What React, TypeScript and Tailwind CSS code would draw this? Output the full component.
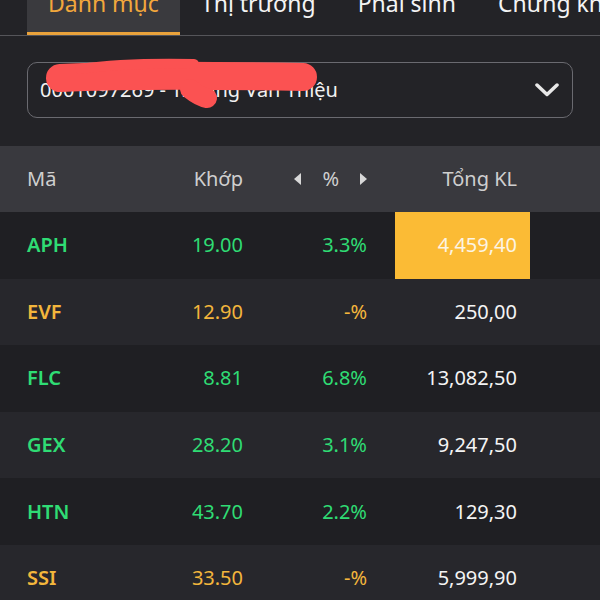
import React from "react";

// Row data for the watchlist table
interface Quote {
  code: string;
  price: string;
  change: string;
  volume: string;
  tone: "up" | "ref";
  flash?: boolean;
}

const quotes: Quote[] = [
  { code: "APH", price: "19.00", change: "3.3%", volume: "4,459,40", tone: "up", flash: true },
  { code: "EVF", price: "12.90", change: "-%", volume: "250,00", tone: "ref" },
  { code: "FLC", price: "8.81", change: "6.8%", volume: "13,082,50", tone: "up" },
  { code: "GEX", price: "28.20", change: "3.1%", volume: "9,247,50", tone: "up" },
  { code: "HTN", price: "43.70", change: "2.2%", volume: "129,30", tone: "up" },
  { code: "SSI", price: "33.50", change: "-%", volume: "5,999,90", tone: "ref" },
];

const tabs = ["Danh mục", "Thị trường", "Phái sinh", "Chứng khoán"];

const App = () => {
  return (
    <div
      className="w-[600px] h-[600px] overflow-hidden bg-[#232327] text-white"
      style={{ fontFamily: "'Noto Sans', Roboto, sans-serif" }}
    >
      {/* Tabs (scrolled, top half clipped) */}
      <div className="flex h-[36px] pl-[27px] border-b border-[#55555a] overflow-hidden whitespace-nowrap">
        {tabs.map((t, i) => (
          <div
            key={t}
            className={
              i === 0
                ? "shrink-0 h-[35px] px-[21px] bg-[#3a3a3e] border-b-[3px] border-[#e9a23b]"
                : "shrink-0 h-[35px] px-[21px]"
            }
          >
            <div
              className={
                i === 0
                  ? "-mt-[9px] text-[23px] leading-[24px] text-[#f2a73c]"
                  : "-mt-[9px] text-[23px] leading-[24px] text-[#f4f4f4]"
              }
            >
              {t}
            </div>
          </div>
        ))}
      </div>

      {/* Account select */}
      <div className="px-[27px] pt-[26px] pb-[28px]">
        <div className="relative flex items-center h-[56px] pl-[12px] pr-[13px] rounded-[10px] border border-[#6a6a70]">
          <span className="flex-1 text-[20px] text-[#f2f2f2]">0001097269 - Trương Văn Thiệu</span>
          <svg width="24" height="14" viewBox="0 0 24 14" fill="none">
            <path d="M2 2 L12 11.5 L22 2" stroke="#e8e8e8" strokeWidth="3.5" strokeLinecap="round" strokeLinejoin="round" />
          </svg>
          {/* red scribble redaction, drawn in page coordinates */}
          <svg
            className="absolute left-[-1px] top-[-13px] pointer-events-none"
            width="320"
            height="66"
            viewBox="27 49 320 66"
            fill="none"
          >
            <path d="M60 77 C 120 74, 200 74, 303 76" stroke="#fb5252" strokeWidth="28" strokeLinecap="round" />
            <path d="M80 68 C 115 63, 150 62, 194 63" stroke="#fb5252" strokeWidth="10" strokeLinecap="round" />
            <path d="M190 88 Q 200 96 207 97" stroke="#fb5252" strokeWidth="20" strokeLinecap="round" />
          </svg>
        </div>
      </div>

      {/* Table header */}
      <div className="flex items-center h-[66px] pl-[27px] bg-[#39393e] text-[20px] text-[#cfcfcf]">
        <div className="w-[120px]">Mã</div>
        <div className="w-[96px] text-right">Khớp</div>
        <div className="w-[125px] flex items-center justify-end">
          <svg width="7" height="12" viewBox="0 0 7 12"><path d="M7 0 L0 6 L7 12 Z" fill="#d8d8d8" /></svg>
          <span className="ml-[21px] mr-[21px]">%</span>
          <svg width="7" height="12" viewBox="0 0 7 12" className="mr-[1px]"><path d="M0 0 L7 6 L0 12 Z" fill="#d8d8d8" /></svg>
        </div>
        <div className="w-[27px]" />
        <div className="w-[135px] pr-[13px] text-right">Tổng KL</div>
      </div>

      {/* Rows */}
      {quotes.map((q, i) => {
        const color = q.tone === "up" ? "text-[#2fdc74]" : "text-[#f3b63c]";
        return (
          <div
            key={q.code}
            className={
              i % 2 === 0
                ? "flex items-center h-[66.6px] pl-[27px] bg-[#1f1f23] text-[20px]"
                : "flex items-center h-[66.6px] pl-[27px] bg-[#27272c] text-[20px]"
            }
          >
            <div className={`w-[120px] font-semibold ${color}`}>{q.code}</div>
            <div className={`w-[96px] text-right ${color}`}>{q.price}</div>
            <div className={`w-[125px] pr-[1px] text-right ${color}`}>{q.change}</div>
            <div className="w-[27px]" />
            <div
              className={
                q.flash
                  ? "w-[135px] h-full flex items-center justify-end pr-[13px] bg-[#fbbb35] text-[#fbf4e4]"
                  : "w-[135px] h-full flex items-center justify-end pr-[13px] text-[#f4f4f4]"
              }
            >
              {q.volume}
            </div>
          </div>
        );
      })}
    </div>
  );
};

export default App;
